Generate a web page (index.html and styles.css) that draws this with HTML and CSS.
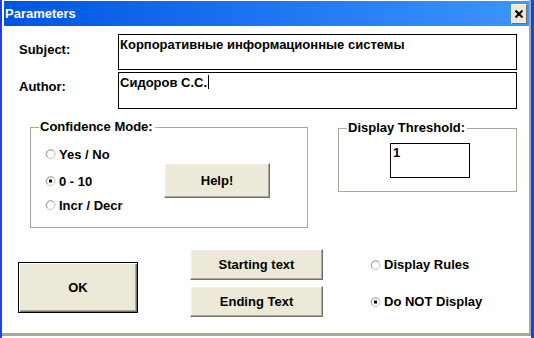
FILE: index.html
```html
<!DOCTYPE html>
<html>
<head>
<meta charset="utf-8">
<link rel="stylesheet" href="styles.css">
</head>
<body>
<div class="window">
  <div class="frame">
    <div class="titlebar">
      <span class="title">Parameters</span>
      <span class="close"><svg width="8" height="8" viewBox="0 0 8 8"><path d="M0.5 0.5 L7.5 7.5 M7.5 0.5 L0.5 7.5" stroke="#000" stroke-width="2"/></svg></span>
    </div>
    <div class="fields">
      <div class="label l-subject">Subject:</div>
      <div class="textbox tb-subject">Корпоративные информационные системы</div>
      <div class="label l-author">Author:</div>
      <div class="textbox tb-author">Сидоров С.С.<span class="caret"></span></div>
    </div>
    <div class="middle">
      <fieldset class="group conf">
        <legend>Confidence Mode:</legend>
        <div class="conf-body">
          <div class="radios">
            <div class="radio r1"><svg class="rb" width="12" height="12" viewBox="0 0 12 12"><circle cx="5.5" cy="6" r="4.5" fill="#fff" stroke="#c4c2b8"/><path d="M2.3 9 A4.5 4.5 0 0 1 8.7 2.8" fill="none" stroke="#a9a79c"/></svg>Yes / No</div>
            <div class="radio r2"><svg class="rb" width="12" height="12" viewBox="0 0 12 12"><circle cx="5.5" cy="6" r="4.5" fill="#fff" stroke="#c4c2b8"/><path d="M2.3 9 A4.5 4.5 0 0 1 8.7 2.8" fill="none" stroke="#a9a79c"/><rect x="4" y="4.5" width="3" height="3" fill="#000"/></svg>0 - 10</div>
            <div class="radio r3"><svg class="rb" width="12" height="12" viewBox="0 0 12 12"><circle cx="5.5" cy="6" r="4.5" fill="#fff" stroke="#c4c2b8"/><path d="M2.3 9 A4.5 4.5 0 0 1 8.7 2.8" fill="none" stroke="#a9a79c"/></svg>Incr / Decr</div>
          </div>
          <div class="btn help">Help!</div>
        </div>
      </fieldset>
      <fieldset class="group thr">
        <legend>Display Threshold:</legend>
        <div class="thr-body">
          <div class="textbox tb-thr">1</div>
        </div>
      </fieldset>
    </div>
    <div class="bottom">
      <div class="btn ok">OK</div>
      <div class="btncol">
        <div class="btn txtbtn">Starting text</div>
        <div class="btn txtbtn">Ending Text</div>
      </div>
      <div class="radcol">
        <div class="radio brow"><svg class="rb" width="12" height="12" viewBox="0 0 12 12"><circle cx="5.5" cy="6" r="4.5" fill="#fff" stroke="#c4c2b8"/><path d="M2.3 9 A4.5 4.5 0 0 1 8.7 2.8" fill="none" stroke="#a9a79c"/></svg>Display Rules</div>
        <div class="radio brow"><svg class="rb" width="12" height="12" viewBox="0 0 12 12"><circle cx="5.5" cy="6" r="4.5" fill="#fff" stroke="#c4c2b8"/><path d="M2.3 9 A4.5 4.5 0 0 1 8.7 2.8" fill="none" stroke="#a9a79c"/><rect x="4" y="4.5" width="3" height="3" fill="#000"/></svg>Do NOT Display</div>
      </div>
    </div>
  </div>
</div>
</body>
</html>
```
FILE: styles.css
```css
* { box-sizing: border-box; }
html, body { margin: 0; padding: 0; background: #fff; }
body {
  font-family: "Liberation Sans", Arial, sans-serif;
  font-weight: bold;
  font-size: 13px;
  color: #000;
}
.window {
  width: 534px;
  height: 338px;
  border-left: 2px solid #1f3cf5;
  border-right: 3px solid #1f3cf5;
  padding-bottom: 2px;
  background: #fff;
  display: flex;
  flex-direction: column;
}
.frame {
  flex: 1;
  border-right: 2px solid #aca899;
  border-bottom: 3px solid #aca899;
  display: flex;
  flex-direction: column;
}
.titlebar {
  margin: 1px 0 0 2px;
  height: 25px;
  background: linear-gradient(to right, #0054e3, #3d95ff);
  display: flex;
  align-items: center;
  justify-content: space-between;
  padding: 0 2px 0 1px;
}
.title { color: #fff; font-size: 13px; line-height: 15px; }
.close {
  width: 16px;
  height: 20px;
  margin-top: 1px;
  background: #ece9d8;
  border: 1px solid;
  border-color: #fff #716f64 #716f64 #fff;
  display: flex;
  align-items: center;
  justify-content: center;
}
.fields {
  display: grid;
  grid-template-columns: 99px 399px;
  grid-template-rows: 36px 37px;
  row-gap: 2px;
  padding: 8px 0 0 17px;
}
.label { line-height: 15px; }
.l-subject { padding-top: 8px; }
.l-author { padding-top: 7px; }
.textbox {
  border: 1px solid #000;
  padding: 2px 1px;
  line-height: 15px;
  white-space: nowrap;
}
.caret {
  display: inline-block;
  width: 1px;
  height: 14px;
  background: #000;
  vertical-align: -2px;
  margin-left: 1px;
}
.middle {
  display: flex;
  align-items: flex-start;
  padding-left: 28px;
  margin-top: 11px;
  gap: 30px;
}
.group {
  margin: 0;
  border: 1px solid #aca899;
  padding: 0;
  min-width: 0;
}
.group legend {
  padding: 0 2px 0 1px;
  margin-left: 8px;
  line-height: 14px;
  white-space: nowrap;
}
.conf { width: 278px; height: 108px; }
.conf-body { display: flex; align-items: flex-start; padding: 8px 0 0 14px; }
.radios { width: 119px; }
.radio {
  display: flex;
  align-items: center;
  height: 24px;
  white-space: nowrap;
}
.rb { margin-right: 2px; flex: none; }
.r2 { margin-top: 3px; }
.help { margin-top: 21px; width: 106px; height: 35px; }
.thr { width: 179px; height: 71px; margin-top: 1px; }
.thr-body { padding: 8px 0 0 51px; }
.tb-thr { width: 80px; height: 35px; padding: 1px 2px; }
.btn {
  background: #ece9d8;
  border: 1px solid;
  border-color: #fff #716f64 #716f64 #fff;
  box-shadow: inset -1px -1px #aca899, inset 1px 1px #f1efe2;
  display: flex;
  align-items: center;
  justify-content: center;
}
.bottom {
  display: flex;
  align-items: flex-start;
  margin-top: 21px;
  padding-left: 16px;
}
.ok {
  width: 120px;
  height: 51px;
  margin-top: 13px;
  border: 1px solid #000;
  box-shadow: inset 1px 1px #fff, inset -1px -1px #716f64, inset -2px -2px #aca899;
}
.btncol { margin-left: 52px; display: flex; flex-direction: column; gap: 6px; }
.txtbtn { width: 133px; height: 31px; }
.radcol { margin-left: 47px; display: flex; flex-direction: column; gap: 6px; }
.brow { height: 31px; }
```
